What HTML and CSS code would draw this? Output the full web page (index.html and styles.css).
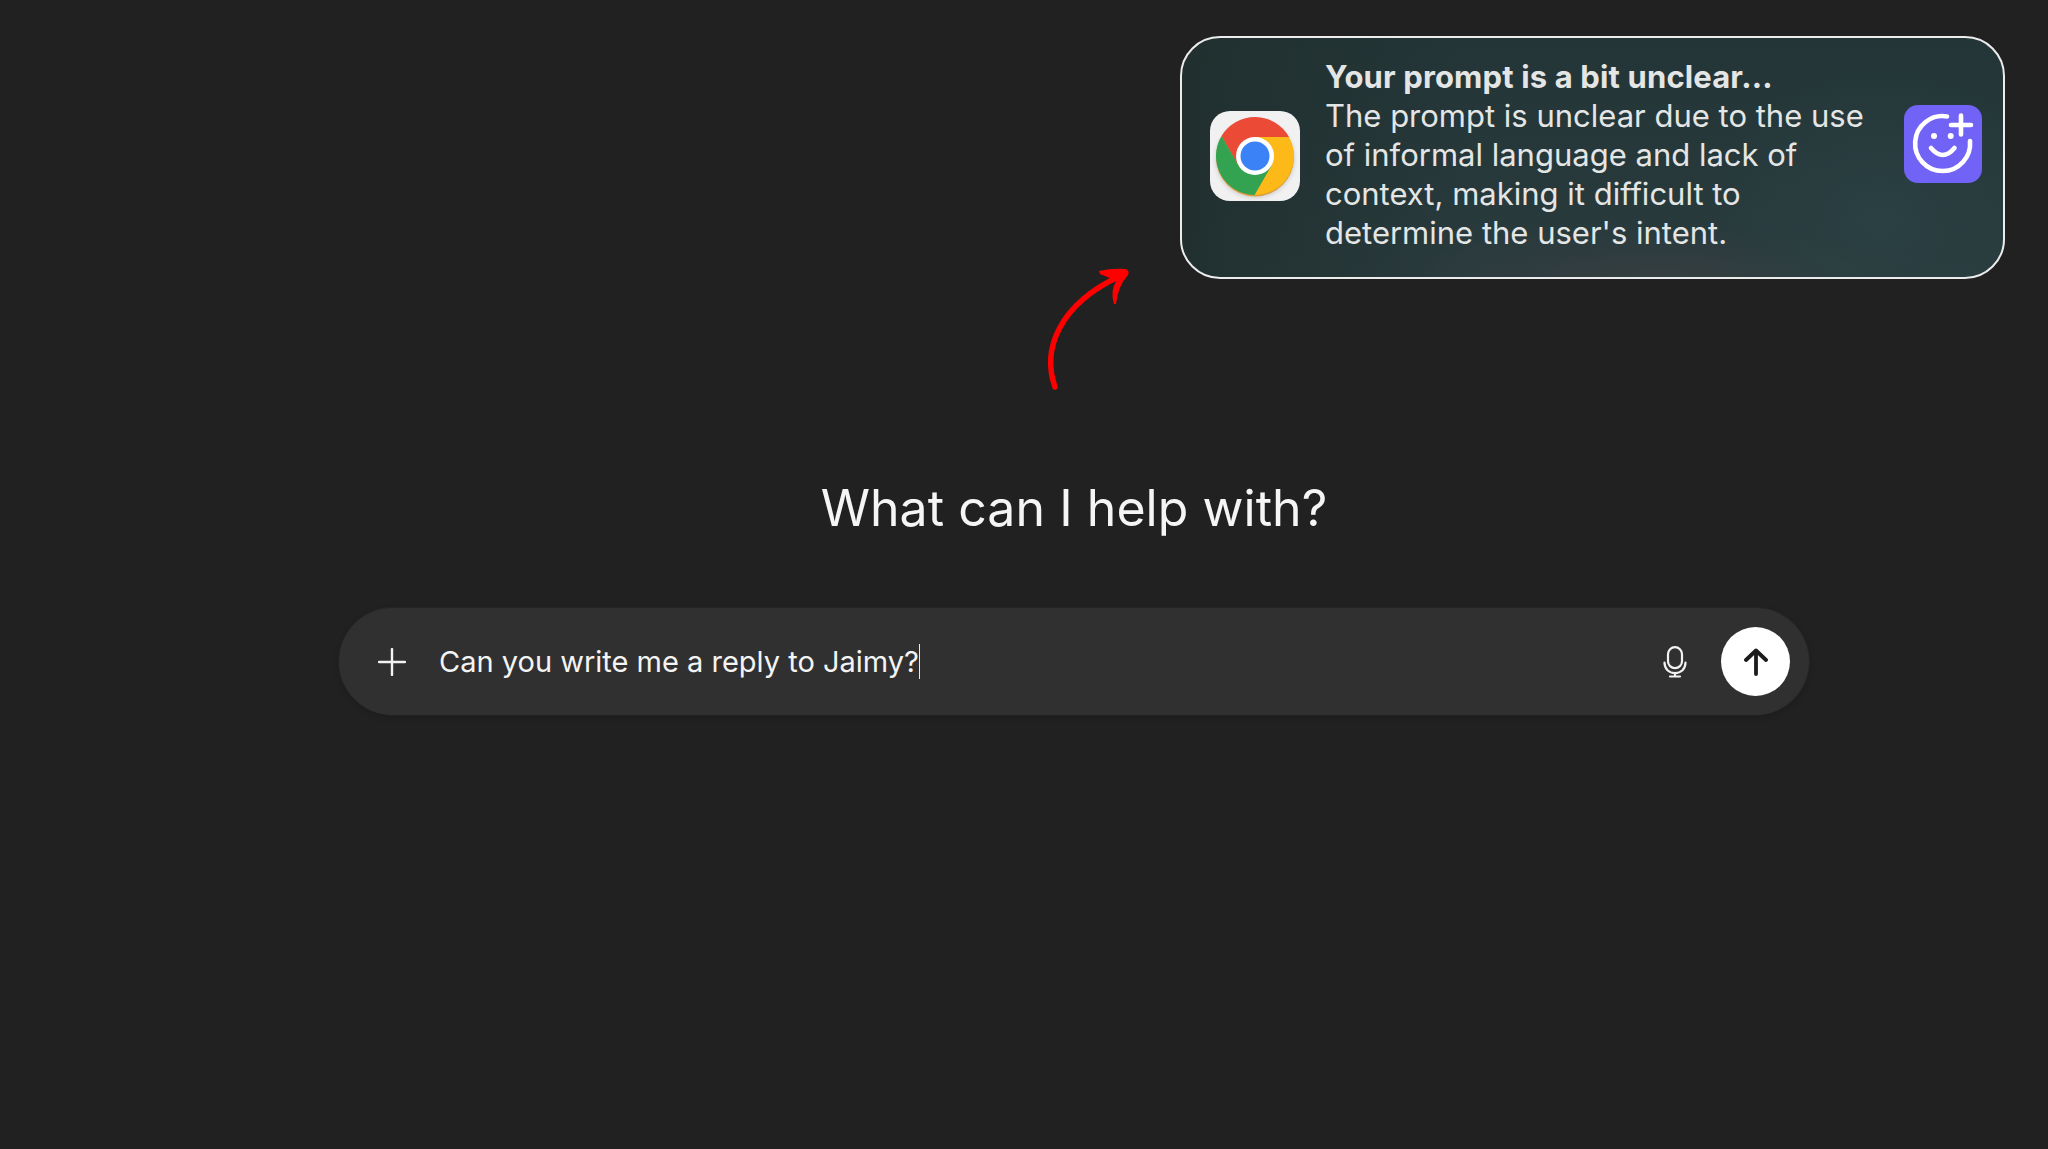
FILE: index.html
```html
<!DOCTYPE html>
<html lang="en">
<head>
<meta charset="utf-8">
<title>What can I help with?</title>
<link rel="stylesheet" href="styles.css">
</head>
<body>
<main class="page">
  <aside class="notice">
    <div class="app-icon">
      <svg width="90" height="90" viewBox="0 0 90 90">
        <ellipse cx="45" cy="48" rx="39.5" ry="39" fill="#000" opacity=".14" class="soft"/>
        <circle cx="45" cy="46.5" r="39" fill="#dd9c3c"/>
        <path d="M45 26L79 26A39 39 0 0 0 11.5 25L28.5 54.5Z" fill="#ea4a36"/>
        <path d="M45 26L79 26A39 39 0 0 1 44.5 84L61.5 54.5Z" fill="#fdb918"/>
        <path d="M11.5 25A39 39 0 0 0 44.5 84L61.5 54.5L28.5 54.5Z" fill="#34a351"/>
        <circle cx="45" cy="45" r="19" fill="#fff"/>
        <circle cx="45" cy="45" r="14.5" fill="#3b82f6"/>
      </svg>
    </div>
    <div class="notice-text">
      <strong class="notice-title">Your prompt is a bit unclear...</strong>
      <p class="notice-body">The prompt is unclear due to the use<br>of informal language and lack of<br>context, making it difficult to<br>determine the user's intent.</p>
    </div>
    <div class="brand-icon">
      <svg width="78" height="78" viewBox="0 0 78 78" fill="none" stroke="#fff" stroke-width="4.6" stroke-linecap="round">
        <path d="M43 11.4A27.5 27.5 0 1 0 66 36"/>
        <path d="M47 20H67M57 10.5V29.5"/>
        <path d="M27 43Q38.8 57 50.5 43"/>
        <circle cx="30" cy="31" r="3" fill="#fff" stroke="none"/>
        <circle cx="46.7" cy="31" r="3" fill="#fff" stroke="none"/>
      </svg>
    </div>
  </aside>

  <svg class="callout-arrow" width="150" height="150" viewBox="0 0 150 150" fill="none">
    <path d="M35 137C22 100 38 55 100 26" stroke="#ff0000" stroke-width="5.5" stroke-linecap="round"/>
    <path d="M79 21Q92 18 106 19Q110 21 108 25Q98 36 96 54L94 54Q90 42 96 31Q88 27 80 24Z" fill="#ff0000"/>
  </svg>

  <section class="chat">
    <h1 class="chat-title">What can I help with?</h1>
    <div class="composer">
      <svg class="plus" width="28" height="28" viewBox="0 0 28 28" stroke="#f2f2f2" stroke-width="2.4" stroke-linecap="round">
        <path d="M1 14H27M14 1V27"/>
      </svg>
      <div class="prompt">Can you write me a reply to Jaimy?<span class="caret"></span></div>
      <svg class="mic" width="24" height="32" viewBox="0 0 24 32" fill="none" stroke="#f2f2f2" stroke-width="2.2" stroke-linecap="round">
        <rect x="5" y="1.2" width="14" height="21" rx="7"/>
        <path d="M1.5 16.5C1.5 23 6 27 12 27S22.5 23 22.5 16.5"/>
        <path d="M12 27V30.5M7 30.5H17"/>
      </svg>
      <button class="send" type="button" aria-label="Send">
        <svg width="24" height="28" viewBox="0 0 24 28" fill="none" stroke="#1c1c1c" stroke-width="3.8" stroke-linecap="round" stroke-linejoin="round">
          <path d="M12 26V2.5M2 12L12 2.5L22 12"/>
        </svg>
      </button>
    </div>
  </section>
</main>
</body>
</html>
```
FILE: styles.css
```css
* { box-sizing: border-box; }
html, body { margin: 0; height: 100%; }
body {
  background: #212121;
  color: #fff;
  font-family: Inter, "Liberation Sans", sans-serif;
  overflow: hidden;
}
.page {
  position: relative;
  height: 1149px;
  padding-top: 36px;
  display: flex;
  flex-direction: column;
}
.notice {
  align-self: flex-end;
  margin-right: 43px;
  width: 825px;
  height: 243px;
  border: 2px solid #ececec;
  border-radius: 40px;
  background:
    radial-gradient(ellipse 170px 150px at 85% 75%, rgba(42,66,68,.75), transparent),
    radial-gradient(ellipse 260px 50px at 58% 100%, rgba(70,66,68,.4), transparent),
    linear-gradient(90deg, #21302f 0%, rgba(33,48,47,0) 35%),
    linear-gradient(180deg, #233537 0%, #2a3b3e 100%);
  display: flex;
  align-items: center;
  padding-left: 28px;
}
.app-icon {
  flex: none;
  width: 90px;
  height: 90px;
  border-radius: 20px;
  background: #f1f1f1;
  margin: -4px 25px 0 0;
}
.soft { filter: blur(2px); }
.notice-text {
  flex: none;
  width: 553px;
  margin-top: -6px;
  font-size: 31px;
  font-weight: 400;
  line-height: 39px;
  color: #e4e6e6;
}
.notice-title { display: block; font-weight: 700; letter-spacing: .14px; color: #e4e5e5; }
.notice-body { margin: 0; }
.brand-icon {
  flex: none;
  width: 78px;
  height: 78px;
  margin: -28px 0 0 26px;
  border-radius: 14px;
  background: #7263f7;
}
.callout-arrow {
  position: absolute;
  left: 1020px;
  top: 250px;
}
.chat {
  margin-top: 199px;
  padding-left: 100px;
  display: flex;
  flex-direction: column;
  align-items: center;
}
.chat-title {
  margin: 0 0 70px;
  font-size: 50px;
  line-height: 60px;
  font-weight: 400;
  letter-spacing: .05px;
  color: #f5f5f5;
}
.composer {
  width: 1470px;
  height: 107px;
  border-radius: 54px;
  background: #303030;
  box-shadow: 0 2px 6px rgba(0,0,0,.18), 0 0 0 1px rgba(255,255,255,.03);
  display: flex;
  align-items: center;
  padding: 0 19px 0 39px;
}
.plus { flex: none; margin-right: 33px; }
.prompt {
  flex: 1;
  display: flex;
  align-items: center;
  font-size: 29px;
  color: #f4f4f4;
}
.caret {
  display: inline-block;
  width: 1.5px;
  height: 35px;
  background: #e8e8e8;
}
.mic { flex: none; margin-right: 34px; }
.send {
  flex: none;
  width: 69px;
  height: 69px;
  padding: 0;
  border: 0;
  border-radius: 50%;
  background: #fff;
  display: flex;
  align-items: center;
  justify-content: center;
}
```
